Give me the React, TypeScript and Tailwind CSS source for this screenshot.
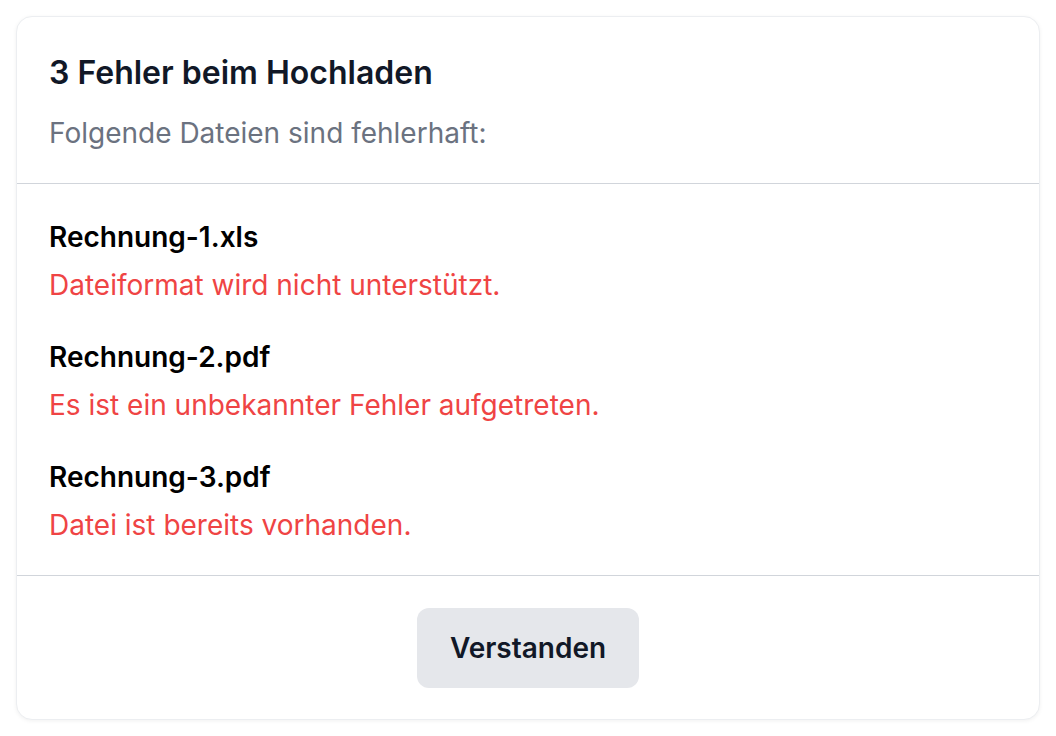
const errors = [
  { file: "Rechnung-1.xls", message: "Dateiformat wird nicht unterstützt." },
  { file: "Rechnung-2.pdf", message: "Es ist ein unbekannter Fehler aufgetreten." },
  { file: "Rechnung-3.pdf", message: "Datei ist bereits vorhanden." },
];

export default function App() {
  return (
    <div className="min-h-screen bg-white p-4 font-['Inter',sans-serif]">
      <div className="flex h-[704px] flex-col rounded-2xl border border-[#eceef1] bg-white shadow-[0_1px_4px_rgba(0,0,0,0.06)]">
        <div className="px-8 pt-8 pb-[30px]">
          <h2 className="text-[32px] leading-[48px] font-semibold text-[#111827]">
            3 Fehler beim Hochladen
          </h2>
          <p className="mt-4 text-[28px] leading-[40px] text-[#6b7280]">
            Folgende Dateien sind fehlerhaft:
          </p>
        </div>

        <div className="flex flex-col gap-8 border-t border-b border-[#d1d5db] px-8 pt-[33px] pb-[30px]">
          {errors.map((e) => (
            <div key={e.file} className="flex flex-col gap-2">
              <div className="text-[28px] leading-[40px] font-semibold text-black">
                {e.file}
              </div>
              <div className="text-[28px] leading-[40px] text-[#ef4444]">
                {e.message}
              </div>
            </div>
          ))}
        </div>

        <div className="flex flex-1 items-center justify-center">
          <button className="h-[80px] rounded-xl bg-[#e5e7eb] px-[33px] text-[28px] font-semibold text-[#111827]">
            Verstanden
          </button>
        </div>
      </div>
    </div>
  );
}
